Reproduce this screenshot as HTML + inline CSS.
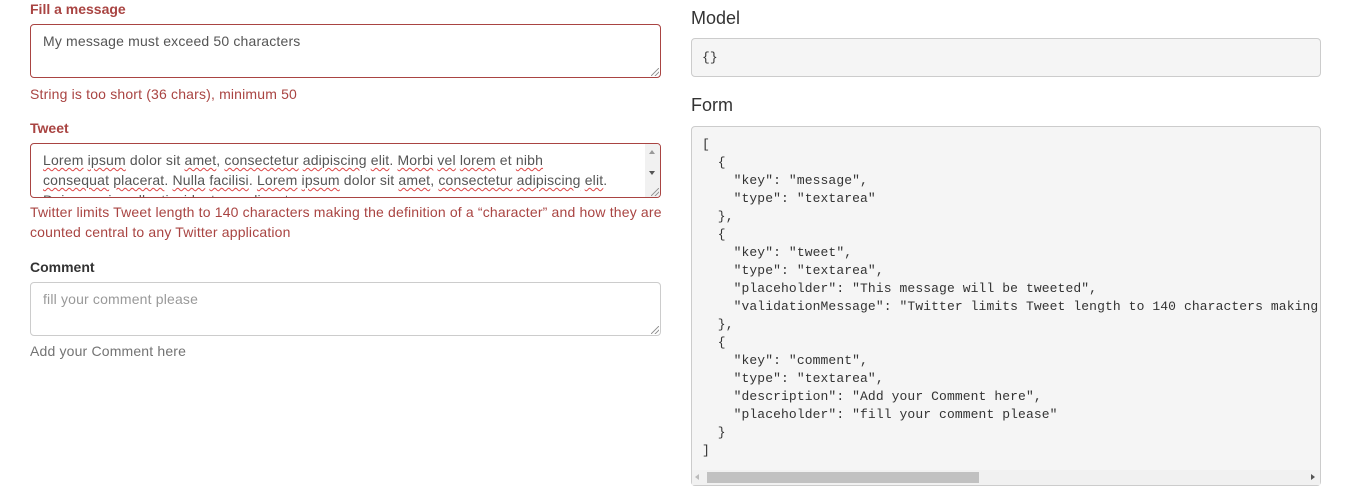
<!DOCTYPE html>
<html><head><style>
body{margin:0;width:1347px;height:488px;background:#fff;font-family:"Liberation Sans",sans-serif;font-size:14px;color:#333;position:relative;overflow:hidden;letter-spacing:0.17px}
.a{position:absolute;white-space:nowrap}
.lbl{font-weight:bold;line-height:20px;letter-spacing:0}
.err{color:#a94442}
.ta{position:absolute;left:30px;border:1px solid #a94442;border-radius:4px;box-sizing:border-box;width:631px;background:#fff;overflow:hidden}
.ta .t{position:absolute;left:12px;top:6px;line-height:20px;color:#555}
.rs{position:absolute;right:1px;bottom:1px;width:8px;height:8px;background:linear-gradient(135deg,transparent 45%,#999 46%,#999 54%,transparent 55%,transparent 70%,#999 71%,#999 79%,transparent 80%)}
.u{text-decoration:underline wavy #d44;text-decoration-thickness:1px;text-underline-offset:2px}
h4{position:absolute;margin:0;font-weight:normal;font-size:18px;left:691px;line-height:20px;letter-spacing:0}
pre{position:absolute;margin:0;left:691px;width:630px;box-sizing:border-box;background:#f5f5f5;border:1px solid #ccc;border-radius:4px;font-family:"Liberation Mono",monospace;font-size:13px;line-height:18px;color:#333;padding:9px 10px;overflow:hidden;letter-spacing:0.1px}
</style></head><body>
<div class="a lbl err" style="left:30px;top:-1px">Fill a message</div>
<div class="ta" style="top:24px;height:54px"><div class="t">My message must exceed 50 characters</div><div class="rs"></div></div>
<div class="a err" style="left:30px;top:84px;line-height:20px">String is too short (36 chars), minimum 50</div>
<div class="a lbl err" style="left:30px;top:118px">Tweet</div>
<div class="ta" style="top:143px;height:55px"><div class="t" style="top:6px">
<span class="u">Lorem</span> <span class="u">ipsum</span> dolor sit <span class="u">amet</span>, <span class="u">consectetur</span> <span class="u">adipiscing</span> <span class="u">elit</span>. <span class="u">Morbi</span> <span class="u">vel</span> <span class="u">lorem</span> et <span class="u">nibh</span><br>
<span class="u">consequat</span> <span class="u">placerat</span>. <span class="u">Nulla</span> <span class="u">facilisi</span>. <span class="u">Lorem</span> <span class="u">ipsum</span> dolor sit <span class="u">amet</span>, <span class="u">consectetur</span> <span class="u">adipiscing</span> <span class="u">elit</span>.<br>Duis mauris nulla, tincidunt nec aliquet</div>
<div style="position:absolute;right:0;top:0;width:15px;height:53px;background:#f1f1f1"></div>
<div style="position:absolute;right:5px;top:6px;border:3px solid transparent;border-bottom:4px solid #999;border-top:0"></div>
<div style="position:absolute;right:5px;top:27px;border:3px solid transparent;border-top:4px solid #555;border-bottom:0"></div>
<div class="rs"></div></div>
<div class="a err" style="left:30px;top:202px;line-height:20px">Twitter limits Tweet length to 140 characters making the definition of a “character” and how they are<br>counted central to any Twitter application</div>
<div class="a lbl" style="left:30px;top:257px">Comment</div>
<div class="ta" style="top:282px;height:54px;border-color:#ccc"><div class="t" style="color:#999">fill your comment please</div><div class="rs"></div></div>
<div class="a" style="left:30px;top:341px;line-height:20px;color:#737373">Add your Comment here</div>

<h4 style="top:8px">Model</h4>
<pre style="top:38px;height:39px;padding-top:10px">{}</pre>
<h4 style="top:95px">Form</h4>
<pre style="top:126px;height:360px;padding-top:9px">[
  {
    "key": "message",
    "type": "textarea"
  },
  {
    "key": "tweet",
    "type": "textarea",
    "placeholder": "This message will be tweeted",
    "validationMessage": "Twitter limits Tweet length to 140 characters making the definition
  },
  {
    "key": "comment",
    "type": "textarea",
    "description": "Add your Comment here",
    "placeholder": "fill your comment please"
  }
]</pre>
<div class="a" style="left:692px;top:470px;width:628px;height:15px;background:#f1f1f1"></div>
<div class="a" style="left:707px;top:472px;width:272px;height:11px;background:#c1c1c1"></div>
<div class="a" style="left:695px;top:474px;border:3px solid transparent;border-right:4px solid #bbb;border-left:0"></div>
<div class="a" style="left:1311px;top:474px;border:3px solid transparent;border-left:4px solid #555;border-right:0"></div>
</body></html>
